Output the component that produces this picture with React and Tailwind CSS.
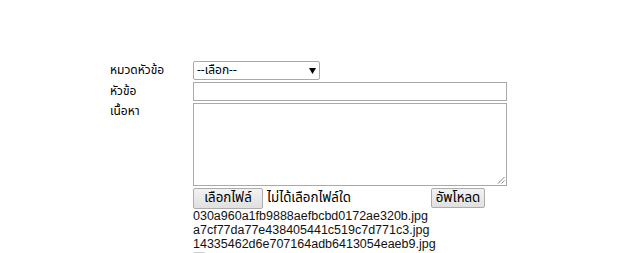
export default function App() {
  const thai = { fontFamily: 'Tahoma, "Noto Sans Thai", "Noto Sans", "DejaVu Sans", sans-serif' };
  return (
    <div className="w-[628px] h-[253px] bg-white overflow-hidden text-black" style={thai}>
      <div className="pt-[61px] pl-[110px] grid grid-cols-[83px_314px] grid-rows-[19px_19px_83px_auto] gap-y-[2px] text-[12px] leading-[19px]">
        <div className="leading-[19px]">หมวดหัวข้อ</div>
        <div>
          <div className="relative w-[127px] h-[19px] border border-[#a9a9a9] rounded-[2px] bg-white flex items-center pl-[3px] text-[12px]">
            <span>--เลือก--</span>
            <svg className="absolute left-[115px] top-[6px]" width="7" height="6" viewBox="0 0 7 6">
              <polygon points="0,0 7,0 3.5,6" fill="#000" />
            </svg>
          </div>
        </div>
        <div>หัวข้อ</div>
        <div>
          <div className="w-[314px] h-[19px] border border-[#a9a9a9] bg-white" />
        </div>
        <div className="leading-[17px]">เนื้อหา</div>
        <div>
          <div className="relative w-[314px] h-[83px] border border-[#a9a9a9] bg-white">
            <svg className="absolute right-[1px] bottom-[1px]" width="9" height="9" viewBox="0 0 9 9">
              <line x1="8.5" y1="2" x2="2" y2="8.5" stroke="#888" strokeWidth="1" />
              <line x1="8.5" y1="5.5" x2="5.5" y2="8.5" stroke="#888" strokeWidth="1" />
            </svg>
          </div>
        </div>
        <div />
        <div className="flex flex-col -mt-[1px]">
          <div className="flex items-center h-[22px] text-[13.33px]">
            <div className="w-[238px] flex items-center">
              <div className="w-[70px] h-[21px] border border-[#adadad] rounded-[2px] bg-gradient-to-b from-[#f2f2f2] to-[#e0e0e0] flex items-center justify-center">
                เลือกไฟล์
              </div>
              <span className="ml-[4px]">ไม่ได้เลือกไฟล์ใด</span>
            </div>
            <div className="w-[54px] h-[20px] border border-[#adadad] rounded-[2px] bg-gradient-to-b from-[#f2f2f2] to-[#e0e0e0] flex items-center justify-center">
              อัพโหลด
            </div>
          </div>
          <div className="text-[12.5px] leading-[14px] text-[#111]" style={{ fontFamily: '"Liberation Sans", Arial, sans-serif' }}>
            <div>030a960a1fb9888aefbcbd0172ae320b.jpg</div>
            <div>a7cf77da77e438405441c519c7d771c3.jpg</div>
            <div>14335462d6e707164adb6413054eaeb9.jpg</div>
            <div className="mt-[1px] w-[12px] h-[4px] border-t border-x border-[#ccc] rounded-t-[2px]" />
          </div>
        </div>
      </div>
    </div>
  );
}
